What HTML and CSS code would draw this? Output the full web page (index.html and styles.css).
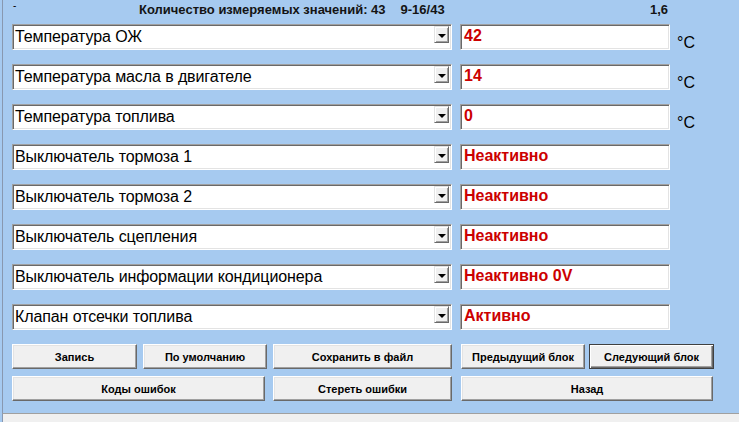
FILE: index.html
```html
<!DOCTYPE html>
<html lang="ru">
<head>
<meta charset="utf-8">
<title>Измеряемые значения</title>
<link rel="stylesheet" href="styles.css">
</head>
<body>
<div class="window">
  <div class="panel">
    <div class="header">
      <span class="dash">-</span>
      <span class="title">Количество измеряемых значений: 43<span class="range">9-16/43</span></span>
      <span class="ver">1,6</span>
    </div>
    <div class="rows">
      <div class="row">
        <div class="select"><span class="label">Температура ОЖ</span><span class="drop"><span class="tri"></span></span></div>
        <div class="value">42</div>
        <span class="unit">°C</span>
      </div>
      <div class="row">
        <div class="select"><span class="label">Температура масла в двигателе</span><span class="drop"><span class="tri"></span></span></div>
        <div class="value">14</div>
        <span class="unit">°C</span>
      </div>
      <div class="row">
        <div class="select"><span class="label">Температура топлива</span><span class="drop"><span class="tri"></span></span></div>
        <div class="value">0</div>
        <span class="unit">°C</span>
      </div>
      <div class="row">
        <div class="select"><span class="label">Выключатель тормоза 1</span><span class="drop"><span class="tri"></span></span></div>
        <div class="value">Неактивно</div>
        <span class="unit"></span>
      </div>
      <div class="row">
        <div class="select"><span class="label">Выключатель тормоза 2</span><span class="drop"><span class="tri"></span></span></div>
        <div class="value">Неактивно</div>
        <span class="unit"></span>
      </div>
      <div class="row">
        <div class="select"><span class="label">Выключатель сцепления</span><span class="drop"><span class="tri"></span></span></div>
        <div class="value">Неактивно</div>
        <span class="unit"></span>
      </div>
      <div class="row">
        <div class="select"><span class="label">Выключатель информации кондиционера</span><span class="drop"><span class="tri"></span></span></div>
        <div class="value">Неактивно 0V</div>
        <span class="unit"></span>
      </div>
      <div class="row">
        <div class="select"><span class="label">Клапан отсечки топлива</span><span class="drop"><span class="tri"></span></span></div>
        <div class="value">Активно</div>
        <span class="unit"></span>
      </div>
    </div>
    <div class="buttons">
      <div class="btn-row">
        <button class="btn b-rec">Запись</button>
        <button class="btn b-def">По умолчанию</button>
        <button class="btn b-save">Сохранить в файл</button>
        <button class="btn b-prev">Предыдущий блок</button>
        <button class="btn b-next">Следующий блок</button>
      </div>
      <div class="btn-row">
        <button class="btn b-codes">Коды ошибок</button>
        <button class="btn b-clear">Стереть ошибки</button>
        <button class="btn b-back">Назад</button>
      </div>
    </div>
  </div>
  <div class="status"></div>
</div>
</body>
</html>
```
FILE: styles.css
```css
html, body {
  margin: 0;
  padding: 0;
}
body {
  background: #a6caf0;
  font-family: "Liberation Sans", Arial, sans-serif;
  color: #000;
}
.window {
  width: 739px;
  height: 422px;
  display: flex;
  flex-direction: column;
  overflow: hidden;
}
.panel {
  height: 413px;
  margin-left: 2px;
  border-left: 1px solid #8898b0;
  display: flex;
  flex-direction: column;
}
.header {
  height: 24px;
  display: flex;
  align-items: flex-start;
  font-size: 13px;
  font-weight: bold;
  line-height: 14px;
}
.dash {
  width: 10px;
  margin-left: 10px;
  font-size: 10px;
  line-height: 12px;
  font-weight: normal;
}
.title {
  margin-left: 116px;
  margin-top: 3px;
  color: #141414;
}
.range {
  margin-left: 15px;
}
.ver {
  margin-left: auto;
  margin-right: 71px;
  margin-top: 3px;
  color: #141414;
}
.rows {
  display: flex;
  flex-direction: column;
  gap: 14px;
  padding-left: 9px;
}
.row {
  display: flex;
  height: 26px;
}
.select {
  width: 440px;
  height: 26px;
  box-sizing: border-box;
  background: #fff;
  border-top: 1px solid #a0a0a0;
  border-left: 1px solid #a0a0a0;
  border-right: 1px solid #ffffff;
  border-bottom: 1px solid #ffffff;
  box-shadow: inset 1px 1px 0 #696969, inset -1px -1px 0 #e3e3e3;
  display: flex;
  justify-content: space-between;
  align-items: flex-start;
}
.label {
  font-size: 16px;
  line-height: 22px;
  margin-left: 2px;
  margin-top: 1px;
  letter-spacing: -0.1px;
}
.drop {
  width: 15px;
  height: 17px;
  margin-top: 1px;
  margin-right: 2px;
  box-sizing: border-box;
  background: #f0f0f0;
  border-top: 1px solid #e3e3e3;
  border-left: 1px solid #e3e3e3;
  border-right: 1px solid #696969;
  border-bottom: 1px solid #696969;
  box-shadow: inset 1px 1px 0 #fff, inset -1px -1px 0 #a0a0a0;
  display: flex;
  align-items: center;
  justify-content: center;
}
.tri {
  width: 0;
  height: 0;
  border-left: 4px solid transparent;
  border-right: 4px solid transparent;
  border-top: 4px solid #000;
  margin-top: 2px;
}
.value {
  width: 210px;
  height: 26px;
  margin-left: 8px;
  box-sizing: border-box;
  background: #fff;
  border-top: 1px solid #a0a0a0;
  border-left: 1px solid #a0a0a0;
  border-right: 1px solid #ffffff;
  border-bottom: 1px solid #ffffff;
  box-shadow: inset 1px 1px 0 #696969, inset -1px -1px 0 #e3e3e3;
  color: #cc0000;
  font-weight: bold;
  font-size: 16px;
  line-height: 20px;
  padding-left: 3px;
  padding-top: 1px;
}
.unit {
  margin-left: 7px;
  font-size: 16px;
  line-height: 18px;
  margin-top: 10px;
}
.buttons {
  margin-top: 14px;
  padding-left: 9px;
  display: flex;
  flex-direction: column;
  gap: 7px;
}
.btn-row {
  display: flex;
}
.btn {
  height: 25px;
  box-sizing: border-box;
  margin: 0;
  padding: 0;
  background: #f0f0f0;
  font-family: "Liberation Sans", Arial, sans-serif;
  font-size: 11px;
  font-weight: bold;
  color: #000;
  border-top: 1px solid #fff;
  border-left: 1px solid #fff;
  border-right: 1px solid #696969;
  border-bottom: 1px solid #696969;
  box-shadow: inset -1px -1px 0 #a0a0a0, inset 1px 1px 0 #e3e3e3;
}
.b-rec { width: 125px; }
.b-def { width: 124px; margin-left: 6px; }
.b-save { width: 179px; margin-left: 6px; }
.b-prev { width: 124px; margin-left: 9px; }
.b-next {
  width: 125px;
  margin-left: 4px;
  border: 1px solid #404040;
  box-shadow: inset 1px 1px 0 #fff, inset -1px -1px 0 #696969, inset -2px -2px 0 #a0a0a0;
}
.b-codes { width: 253px; }
.b-clear { width: 179px; margin-left: 8px; }
.b-back { width: 252px; margin-left: 9px; }
.status {
  flex: 1;
  margin-left: 2px;
  border-left: 1px solid #8898b0;
  border-top: 1px solid #a0a0a0;
  background: #f0f0f0;
}
```
